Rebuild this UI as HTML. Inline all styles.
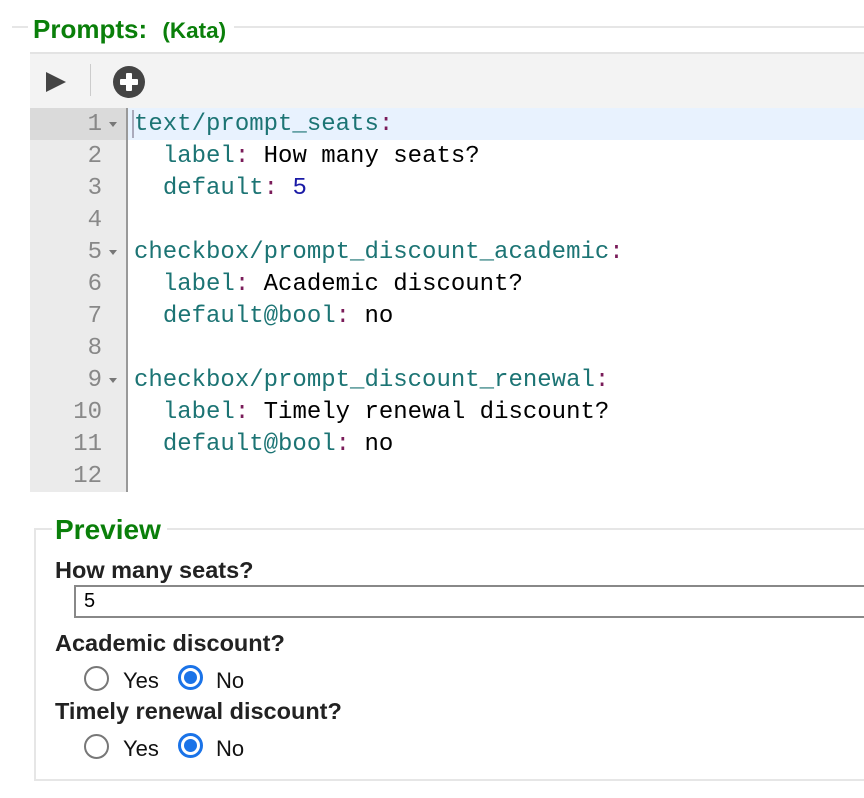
<!DOCTYPE html>
<html><head><style>
body{margin:0;width:864px;height:798px;background:#fff;position:relative;overflow:hidden;font-family:"Liberation Sans",sans-serif}
.abs{position:absolute}
.line{position:absolute;left:0;width:864px;height:32px;font-family:"Liberation Mono",monospace;font-size:24px;line-height:34px}
.num{position:absolute;left:30px;width:72px;text-align:right;color:#888}
.code{position:absolute;left:134px;white-space:pre;color:#000}
.k{color:#1c7474}.p{color:#7a1c5a}.n{color:#1a1aa6}
.fold{position:absolute;left:109px;top:14px;width:0;height:0;border-left:4px solid transparent;border-right:4px solid transparent;border-top:5px solid #777}
.lbl{position:absolute;left:55px;font-weight:bold;font-size:23.5px;color:#222}
.radio{position:absolute;width:25px;height:25px;border-radius:50%;box-sizing:border-box;border:2px solid #777;background:#fff}
.radio.on{border:3px solid #1a73e8}
.radio.on::after{content:"";position:absolute;left:3px;top:3px;width:13px;height:13px;border-radius:50%;background:#1a73e8}
.rt{position:absolute;font-size:22px;color:#111}
</style></head><body>
<div class="abs" style="left:12px;top:26px;width:852px;height:2px;background:#e6e6e6"></div>
<div class="abs" style="left:28px;top:12px;padding:0 8px 0 5px;background:#fff;color:#0a7f0a;font-weight:bold;font-size:26px;line-height:34px">Prompts: <span style="font-size:22.5px;margin-left:8px">(Kata)</span></div>
<div class="abs" style="left:30px;top:52px;width:834px;height:56px;background:#f3f3f3;border-top:2px solid #e3e3e3;box-sizing:border-box"></div>
<svg class="abs" style="left:44px;top:70px" width="24" height="24"><path d="M2 2 L22 12 L2 22Z" fill="#444"/></svg>
<div class="abs" style="left:90px;top:64px;width:1px;height:32px;background:#ccc"></div>
<svg class="abs" style="left:112px;top:65px" width="34" height="34"><circle cx="17" cy="17" r="16" fill="#444"/><rect x="8" y="14" width="18" height="6" rx="1" fill="#fff"/><rect x="14" y="8" width="6" height="18" rx="1" fill="#fff"/></svg>
<div class="abs" style="left:30px;top:108px;width:96px;height:384px;background:#ebebeb"></div>
<div class="abs" style="left:126px;top:108px;width:2px;height:384px;background:#999"></div>
<div class="abs" style="left:30px;top:108px;width:96px;height:32px;background:#dadada"></div>
<div class="abs" style="left:128px;top:108px;width:736px;height:32px;background:#e8f2fe"></div>
<div class="abs" style="left:132px;top:110px;width:2px;height:28px;background:#aab"></div>
<div class="line" style="top:108px"><span class="num">1</span><span class="fold"></span><span class="code"><span class="k">text/prompt_seats</span><span class="p">:</span></span></div>
<div class="line" style="top:140px"><span class="num">2</span><span class="code">  <span class="k">label</span><span class="p">:</span> How many seats?</span></div>
<div class="line" style="top:172px"><span class="num">3</span><span class="code">  <span class="k">default</span><span class="p">:</span> <span class="n">5</span></span></div>
<div class="line" style="top:204px"><span class="num">4</span></div>
<div class="line" style="top:236px"><span class="num">5</span><span class="fold"></span><span class="code"><span class="k">checkbox/prompt_discount_academic</span><span class="p">:</span></span></div>
<div class="line" style="top:268px"><span class="num">6</span><span class="code">  <span class="k">label</span><span class="p">:</span> Academic discount?</span></div>
<div class="line" style="top:300px"><span class="num">7</span><span class="code">  <span class="k">default@bool</span><span class="p">:</span> no</span></div>
<div class="line" style="top:332px"><span class="num">8</span></div>
<div class="line" style="top:364px"><span class="num">9</span><span class="fold"></span><span class="code"><span class="k">checkbox/prompt_discount_renewal</span><span class="p">:</span></span></div>
<div class="line" style="top:396px"><span class="num">10</span><span class="code">  <span class="k">label</span><span class="p">:</span> Timely renewal discount?</span></div>
<div class="line" style="top:428px"><span class="num">11</span><span class="code">  <span class="k">default@bool</span><span class="p">:</span> no</span></div>
<div class="line" style="top:460px"><span class="num">12</span></div>
<div class="abs" style="left:34px;top:528px;width:840px;height:253px;border:2px solid #e6e6e6;box-sizing:border-box"></div>
<div class="abs" style="left:52px;top:512px;padding:0 6px 0 3px;background:#fff;color:#0a7f0a;font-weight:bold;font-size:28px;line-height:36px">Preview</div>
<div class="lbl" style="top:557px">How many seats?</div>
<div class="abs" style="left:74px;top:585px;width:800px;height:33px;border:2px solid #888;box-sizing:border-box;font-size:20px;line-height:29px;padding-left:8px">5</div>
<div class="lbl" style="top:630px">Academic discount?</div>
<div class="radio" style="left:84px;top:666px"></div><div class="rt" style="left:123px;top:668px">Yes</div>
<div class="radio on" style="left:178px;top:665px"></div><div class="rt" style="left:216px;top:668px">No</div>
<div class="lbl" style="top:698px">Timely renewal discount?</div>
<div class="radio" style="left:84px;top:734px"></div><div class="rt" style="left:123px;top:736px">Yes</div>
<div class="radio on" style="left:178px;top:733px"></div><div class="rt" style="left:216px;top:736px">No</div>
</body></html>
